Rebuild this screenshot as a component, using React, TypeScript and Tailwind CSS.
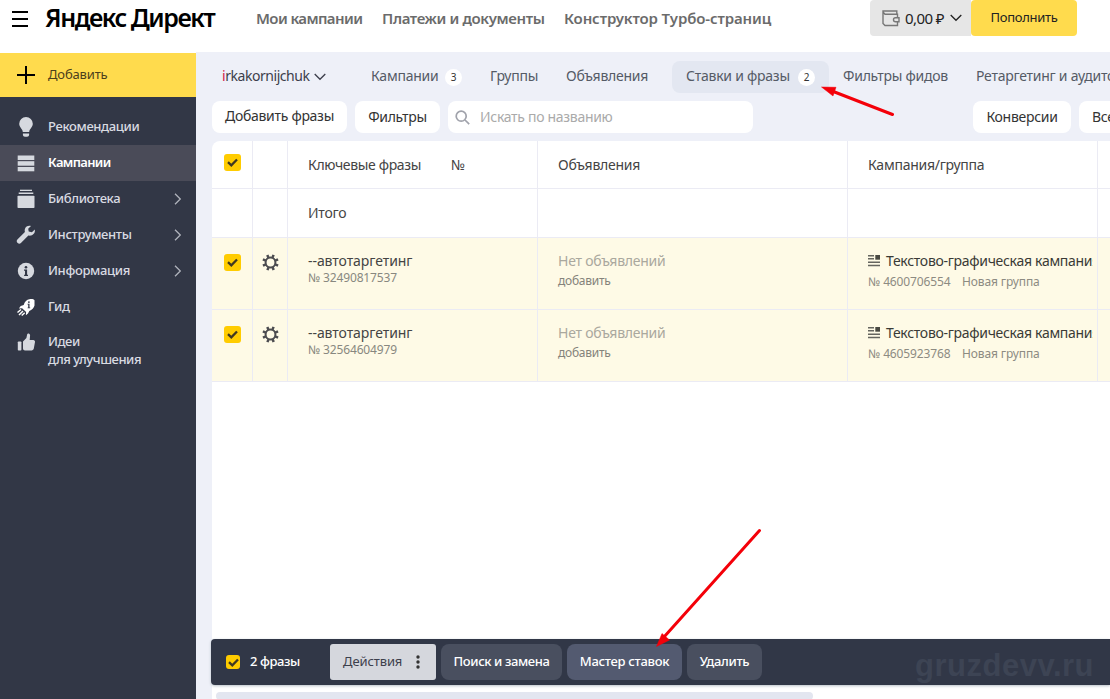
import React from 'react';

type IconName = 'bulb' | 'list' | 'library' | 'wrench' | 'info' | 'rocket' | 'thumb';

interface MenuItem {
  label: string;
  icon: IconName;
  active?: boolean;
  arrow?: boolean;
}

const menu: MenuItem[] = [
  { label: 'Рекомендации', icon: 'bulb' },
  { label: 'Кампании', icon: 'list', active: true },
  { label: 'Библиотека', icon: 'library', arrow: true },
  { label: 'Инструменты', icon: 'wrench', arrow: true },
  { label: 'Информация', icon: 'info', arrow: true },
  { label: 'Гид', icon: 'rocket' },
];

const rows = [
  { id: '32490817537', campaign: '4600706554' },
  { id: '32564604979', campaign: '4605923768' },
];

function MenuIcon({ name }: { name: IconName }) {
  return (
    <svg width="20" height="22" viewBox="0 0 20 22" fill="#d6d9df" className="shrink-0">
      {name === 'bulb' && (
        <>
          <path d="M10 1a6.8 6.8 0 0 0-6.8 6.8c0 3.6 3.3 5 3.6 8.2h6.4c.3-3.2 3.6-4.6 3.6-8.2A6.8 6.8 0 0 0 10 1Z" />
          <path d="M6.9 17.5h6.2v1.2c0 1-1 2-2 2H8.900c-1 0-2-1-2-2Z" />
        </>
      )}
      {name === 'list' && (
        <>
          <rect x="1.7" y="3.500" width="16.6" height="4.500" />
          <rect x="1.7" y="9.2" width="16.6" height="4.500" />
          <rect x="1.7" y="15" width="16.6" height="4.3" />
        </>
      )}
      {name === 'library' && (
        <>
          <rect x="4" y="1.7" width="12" height="1.3" />
          <rect x="2.7" y="4.5" width="14.6" height="1.5" />
          <rect x="1.5" y="7.7" width="17" height="12.3" rx=".8" />
        </>
      )}
      {name === 'wrench' && (
        <path d="M18.8 5.5 15.9 8.2 12.7 7.6 12.2 4.8 15 2C12.5 1.2 9.7 2.3 8.9 4.9c-.3 1-.3 2 0 3L1.4 15.5c-.9.9-.9 2.3 0 3.2l.3.3c.9.9 2.3.9 3.2 0l7.5-7.5c4 .8 7.2-2.2 6.4-6Z" />
      )}
      {name === 'info' && (
        <>
          <circle cx="10" cy="11" r="8.2" />
          <circle cx="10" cy="7.3" r="1.3" fill="#323746" />
          <path d="M8 9.5h3.1v5.2h.9v1.2H8.100v-1.2H9v-4H8Z" fill="#323746" />
        </>
      )}
      {name === 'rocket' && (
        <>
          <path fill="#fff" d="M18.5 4.3v5.2c-.3 2-2.7 4.6-5.2 5.4L12 17.6l-2.1 1.7.2-3.2-4-3.9-3.2.2L4.7 10l3-1C8.5 5.7 11 3.6 13.3 3.2c2-.5 4.4-.4 5.2 1.100Z" />
          <path stroke="#fff" strokeWidth="1.5" fill="none" d="m5 13.500-3.500 3M7 15l-4 4M8.700 16.800l-3 2.700" />
          <circle cx="12.9" cy="6.1" r=".9" fill="#323746" />
          <path d="M11.5 7.8h2v3.6h.7v.8h-2.600v-.8h.6V8.600h-.7Z" fill="#323746" />
        </>
      )}
      {name === 'thumb' && (
        <>
          <rect x="1.8" y="9.5" width="3.6" height="9" rx=".8" />
          <path d="M7 9.6 10.4 6 11.2 2.3c.4-1.3 2.8-.8 2.9 1.2L13.700 8h3.600c1.1 0 1.9 1 1.7 2l-1.200 6.600c-.2 1.1-1.1 1.9-2.2 1.9H9c-1.1 0-2-.9-2-2Z" />
        </>
      )}
    </svg>
  );
}

function Chevron({ className }: { className?: string }) {
  return (
    <svg width="12" height="8" viewBox="0 0 12 8" fill="none" stroke="currentColor" strokeWidth="1.3" className={className}>
      <path d="m.7 1 5.3 5.3L11.3 1" />
    </svg>
  );
}

function Checkbox({ small }: { small?: boolean }) {
  return (
    <span className={`flex shrink-0 items-center justify-center rounded-[3px] bg-[#fc0] ${small ? 'size-[14px]' : 'size-[17px]'}`}>
      <svg width="11" height="9" viewBox="0 0 11 9" fill="none" stroke="#3f3822" strokeWidth="2.3">
        <path d="M1 4.2 4.3 7.3 10 1.5" />
      </svg>
    </span>
  );
}

function Gear() {
  return (
    <svg width="17" height="17" viewBox="-8.5 -8.5 17 17" fill="none" stroke="#4c4c50">
      <circle r="4.9" strokeWidth="2" />
      {[22, 67, 112, 157, 202, 247, 292, 337].map((angle) => (
        <path key={angle} d="M0-5V-8.200" strokeWidth="2.500" transform={`rotate(${angle})`} />
      ))}
    </svg>
  );
}

function CampaignIcon() {
  return (
    <svg width="12" height="12" viewBox="0 0 12 12" fill="#65655f" className="shrink-0">
      <path d="M0 0h6v1.500H0zM0 3h6v1.500H0zM0 6.500h12v1.500H0zM0 9.700h12v1.500H0z" />
      <path d="M7.300 0H12v4.700H7.300z" fill="#494942" />
    </svg>
  );
}

function Header() {
  return (
    <header className="flex h-[52px] shrink-0 items-start bg-white">
      <div className="flex w-[45px] flex-col gap-[5px] pt-[11px] pl-3">
        <span className="h-[2px] w-4 bg-black" />
        <span className="h-[2px] w-4 bg-black" />
        <span className="h-[2px] w-4 bg-black" />
      </div>
      <div className="w-[211px] text-[25px] leading-[34px] font-semibold tracking-[-1.45px] text-black">Яндекс Директ</div>
      <nav className="flex w-[614px] text-[15px] leading-[37px] font-semibold text-[#6b6b6b]">
        <span className="w-[126px] tracking-[-0.6px]">Мои кампании</span>
        <span className="w-[182px] tracking-[-0.38px]">Платежи и документы</span>
        <span className="tracking-[-0.12px]">Конструктор Турбо-страниц</span>
      </nav>
      <div className="flex h-9 w-[101px] items-center rounded-l bg-[#e6e6e6] pl-3 text-[#222]">
        <svg width="18" height="17" viewBox="0 0 18 17" fill="none" stroke="#777" strokeWidth="1.4">
          <path d="M14.800 4V1H1v12.500l2 2h12.500v-3.500M15.500 7.500V4.200H3L1 2" />
          <path d="M17 7.700h-3.500a2 2 0 0 0 0 4H17Z" />
        </svg>
        <span className="ml-[5px] w-[45px] text-[15px] leading-[34px] tracking-[-0.6px]">0,00 ₽</span>
        <Chevron />
      </div>
      <button className="h-9 w-[106px] rounded bg-[#ffdb4d] text-[13px] tracking-[-0.3px] text-[#222]">Пополнить</button>
    </header>
  );
}

function Sidebar() {
  return (
    <aside className="mt-px w-[196px] shrink-0 bg-[#323746] text-[13px] font-medium tracking-[-0.35px] text-[#d9dbe2]">
      <button className="flex h-11 w-full items-center bg-[#ffdb4d] pl-[17px] font-normal tracking-[-0.15px] text-[#4b401c]">
        <svg width="18" height="18" viewBox="0 0 18 18" stroke="#000" strokeWidth="2">
          <path d="M9 0v18M0 9h18" />
        </svg>
        <span className="ml-[13px]">Добавить</span>
      </button>
      <div className="pt-3">
        {menu.map((item) => (
          <div key={item.label} className={`flex h-9 items-center pr-3 pl-4 ${item.active ? 'bg-[#4a4b58] font-semibold tracking-[-0.65px] text-white' : ''}`}>
            <MenuIcon name={item.icon} />
            <span className="ml-3 grow">{item.label}</span>
            {item.arrow && <Chevron className="-rotate-90 text-[#b0b3bc]" />}
          </div>
        ))}
        <div className="flex items-start pt-[7px] pl-4 leading-[18px]">
          <MenuIcon name="thumb" />
          <span className="ml-3 tracking-[-0.45px]">
            Идеи
            <br />
            для улучшения
          </span>
        </div>
      </div>
    </aside>
  );
}

function Badge({ count }: { count: number }) {
  return <span className="flex size-[17px] items-center justify-center rounded-full bg-white text-[10px] text-[#333]">{count}</span>;
}

function Tabs() {
  return (
    <div className="flex h-8 items-center pl-[26px] text-[14px] leading-[18px] tracking-[-0.25px] whitespace-nowrap text-[#555b66]">
      <div className="flex w-[149px] shrink-0 items-center gap-1 text-[#3c3e4b]">
        <span className="w-[88px] pb-[2px] tracking-[-0.45px]">
          <span className="text-[#d3204a]">i</span>rkakornijchuk
        </span>
        <Chevron />
      </div>
      <div className="flex w-[119px] shrink-0 items-center justify-between pr-[28px]">
        <span className="pb-[2px]">Кампании</span>
        <Badge count={3} />
      </div>
      <span className="w-[76px] shrink-0 pb-[2px]">Группы</span>
      <span className="w-[106px] shrink-0 pb-[2px]">Объявления</span>
      <div className="flex h-8 w-[157px] shrink-0 items-center justify-between rounded-lg bg-[#e3e7f1] pr-[14px] pl-[14px]">
        <span className="pb-[2px]">Ставки и фразы</span>
        <Badge count={2} />
      </div>
      <span className="ml-[14px] w-[133px] shrink-0 pb-[2px]">Фильтры фидов</span>
      <span className="pb-[2px]">Ретаргетинг и аудитории</span>
    </div>
  );
}

function Toolbar() {
  return (
    <div className="mt-2 flex h-8 pl-4 text-[14px] tracking-[-0.3px] whitespace-nowrap text-[#333]">
      <button className="w-[135px] shrink-0 rounded-lg bg-white pb-[3px]">Добавить фразы</button>
      <button className="ml-2 w-[85px] shrink-0 rounded-lg bg-white pb-[2px]">Фильтры</button>
      <div className="ml-2 flex w-[305px] shrink-0 items-center rounded-lg bg-white pl-[7px] text-[#aaa]">
        <svg width="15" height="15" viewBox="0 0 15 15" fill="none" stroke="#a0a2ab" strokeWidth="1.7">
          <circle cx="6.2" cy="6.2" r="5" />
          <path d="m10 10 4.200 4.200" />
        </svg>
        <span className="ml-[10px] pb-[2px]">Искать по названию</span>
      </div>
      <button className="ml-[220px] w-[98px] shrink-0 rounded-lg bg-white pb-[2px]">Конверсии</button>
      <button className="ml-2 w-[80px] shrink-0 rounded-lg bg-white pb-[2px] pl-[13px] text-left">Все</button>
    </div>
  );
}

function Table() {
  const cols = 'grid grid-cols-[41px_35px_250px_310px_250px_20px]';
  const cell = 'border-r border-b border-[#ebebf4]';

  return (
    <div className="mt-2 ml-4 flex-1 overflow-hidden rounded-tl-lg bg-white text-[14px] tracking-[-0.25px] whitespace-nowrap text-[#444]">
      <div className={`${cols} h-12`}>
        <div className={`${cell} pt-[13px] pl-3`}><Checkbox /></div>
        <div className={cell} />
        <div className={`${cell} flex items-center pl-5`}>
          <span className="w-[143px] tracking-[-0.35px]">Ключевые фразы</span>
          <span>№</span>
        </div>
        <div className={`${cell} flex items-center pl-5`}>Объявления</div>
        <div className={`${cell} flex items-center pl-5`}>Кампания/группа</div>
        <div className={cell} />
      </div>
      <div className={`${cols} h-[49px]`}>
        <div className={cell} />
        <div className={cell} />
        <div className={`${cell} flex items-center pb-[2px] pl-5`}>Итого</div>
        <div className={cell} />
        <div className={cell} />
        <div className={cell} />
      </div>
      {rows.map((row) => (
        <div key={row.id} className={`${cols} h-[72px] bg-[#fefae6]`}>
          <div className={`${cell} pt-4 pl-3`}><Checkbox /></div>
          <div className={`${cell} pt-4 pl-[9px]`}><Gear /></div>
          <div className={`${cell} pt-[13px] pl-5`}>
            <div className="leading-5 tracking-[-0.07px]">--автотаргетинг</div>
            <div className="text-[12px] leading-[14px] tracking-[-0.15px] text-[#888880]">№ {row.id}</div>
          </div>
          <div className={`${cell} pt-[13px] pl-5`}>
            <div className="leading-5 text-[#aaa89e]">Нет объявлений</div>
            <div className="text-[12px] leading-5 text-[#85837b]">добавить</div>
          </div>
          <div className={`${cell} pt-[13px] pr-1 pl-5`}>
            <div className="flex items-center overflow-hidden leading-5">
              <CampaignIcon />
              <span className="ml-[6px] tracking-[-0.3px] text-[#3a3a36]">Текстово-графическая кампания</span>
            </div>
            <div className="flex text-[12px] leading-[22px] tracking-[-0.12px] text-[#8d8b82]">
              <span className="w-[94px]">№ {row.campaign}</span>
              <span>Новая группа</span>
            </div>
          </div>
          <div className={cell} />
        </div>
      ))}
    </div>
  );
}

function ActionBar() {
  return (
    <div className="relative ml-[15px] flex h-[46px] shrink-0 items-center rounded-l bg-[#313747] pl-[15px] text-[13px] font-medium tracking-[-0.4px] whitespace-nowrap text-white shadow-[0_1px_3px_#b8c0c8]">
      <Checkbox small />
      <span className="ml-[10px] w-20">2 фразы</span>
      <button className="flex h-9 w-[106px] items-center rounded-[3px] bg-[#d5d7dd] pl-[13px] font-normal tracking-[-0.1px] text-[#3d404c]">
        <span className="w-[73px] text-left">Действия</span>
        <svg width="4" height="14" viewBox="0 0 4 14" fill="#333">
          <circle cx="2" cy="2" r="1.7" />
          <circle cx="2" cy="7" r="1.7" />
          <circle cx="2" cy="12" r="1.7" />
        </svg>
      </button>
      <button className="ml-[5px] h-9 w-[121px] rounded-lg bg-[#494f5f]">Поиск и замена</button>
      <button className="ml-[5px] h-9 w-[115px] rounded-lg bg-[#535a70] tracking-[-0.3px]">Мастер ставок</button>
      <button className="ml-[5px] h-9 w-[75px] rounded-lg bg-[#494f5f] tracking-[-0.3px]">Удалить</button>
      <span className="absolute top-1 right-4 font-['Liberation_Sans'] text-[31px] leading-[46px] font-bold tracking-[0.5px] text-[#3d4454]">gruzdevv.ru</span>
    </div>
  );
}

export default function App() {
  return (
    <div className="relative flex h-[699px] w-[1110px] flex-col overflow-hidden bg-white font-['Noto_Sans',sans-serif]">
      <Header />
      <div className="flex min-h-0 flex-1">
        <Sidebar />
        <main className="flex w-[914px] min-w-0 flex-col overflow-hidden bg-[#eef0f8] pt-[9px]">
          <Tabs />
          <Toolbar />
          <Table />
          <ActionBar />
          <div className="ml-4 h-[14px] shrink-0 bg-white pt-[7px] pl-1">
            <div className="h-2 w-[597px] rounded bg-[#e3e6f0]" />
          </div>
        </main>
      </div>
      <svg className="pointer-events-none absolute top-0 left-0" width="1110" height="699" stroke="#f40009" fill="#f40009">
        <path d="M892.500 114.500 832 91M759.500 530.500 664 637" strokeWidth="3" strokeLinecap="round" />
        <path d="m821.500 87 14.500.3-3 8.700ZM656.500 646.500l5.500-13 7.500 6.500Z" strokeWidth=".5" />
      </svg>
    </div>
  );
}
